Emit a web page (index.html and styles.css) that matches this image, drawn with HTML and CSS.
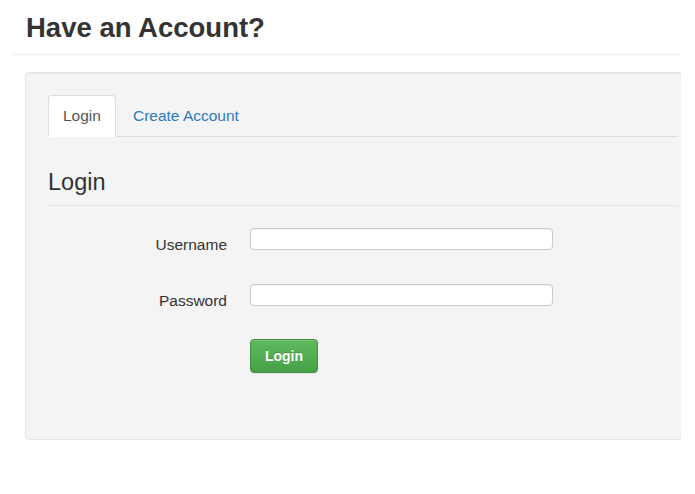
FILE: index.html
```html
<!DOCTYPE html>
<html lang="en">
<head>
  <meta charset="UTF-8" />
  <title>Have an Account?</title>
  <link rel="stylesheet" href="styles.css">
</head>
<body>
  <div class="page">
    <h1 class="page-title">Have an Account?</h1>
    <hr class="rule">
    <div class="well">
      <ul class="tabs">
        <li class="tab active"><a href="#">Login</a></li>
        <li class="tab"><a href="#">Create Account</a></li>
      </ul>
      <form class="login-form">
        <div class="legend">Login</div>
        <div class="form-grid">
          <label class="form-label" for="username">Username</label>
          <input class="form-input" id="username" type="text">
          <label class="form-label" for="password">Password</label>
          <input class="form-input" id="password" type="password">
          <span></span>
          <div><button class="btn-login" type="submit">Login</button></div>
        </div>
      </form>
    </div>
  </div>
</body>
</html>
```

FILE: styles.css
```css
body {
  margin: 0;
  background: #fff;
  color: #333;
  font-family: "Liberation Sans", Arial, sans-serif;
  font-size: 15.5px;
}
.page {
  width: 668px;
  margin-left: 13px;
  padding-top: 11px;
  overflow: hidden;
}
.page-title {
  margin: 0 12px 0 13px;
  font-size: 27.5px;
  line-height: 34px;
  font-weight: bold;
  color: #333;
}
.rule {
  margin: 9px 0 17px;
  border: 0;
  border-top: 1px solid #eee;
}
.well {
  margin-left: 12px;
  margin-right: -20px;
  padding: 22px;
  height: 322px;
  background: #f4f4f4;
  border: 1px solid #e3e3e3;
  border-radius: 4px;
  box-shadow: inset 0 1px 1px rgba(0, 0, 0, .05);
}
.tabs {
  display: flex;
  margin: 0;
  padding: 0;
  list-style: none;
  border-bottom: 1px solid #ddd;
}
.tab {
  margin-bottom: -1px;
  margin-right: 2px;
}
.tab a {
  display: block;
  padding: 10px 14px;
  line-height: 20px;
  border: 1px solid transparent;
  border-radius: 4px 4px 0 0;
  color: #2c7bbd;
  text-decoration: none;
}
.tab.active a {
  color: #555;
  background: #fff;
  border-color: #ddd #ddd transparent;
}
.legend {
  margin-top: 30px;
  padding-bottom: 8px;
  font-size: 23.5px;
  line-height: 30px;
  border-bottom: 1px solid #e5e5e5;
}
.form-grid {
  display: grid;
  grid-template-columns: 179px 303px;
  column-gap: 23px;
  row-gap: 30px;
  margin-top: 22px;
}
.form-label {
  text-align: right;
  padding-top: 8px;
  line-height: 18px;
}
.form-input {
  box-sizing: border-box;
  height: 22px;
  width: 303px;
  margin: 0;
  padding: 2px 6px;
  background: #fff;
  border: 1px solid #ccc;
  border-radius: 4px;
  box-shadow: inset 0 1px 1px rgba(0, 0, 0, .075);
}
.btn-login {
  height: 34px;
  width: 68px;
  padding: 0;
  margin-top: -1px;
  font-family: inherit;
  font-size: 14px;
  font-weight: bold;
  color: #fff;
  text-shadow: 0 -1px 0 rgba(0, 0, 0, .2);
  background: linear-gradient(to bottom, #5fba5f 0, #46a046 100%);
  border: 1px solid #3e8f3e;
  border-radius: 4px;
  box-shadow: inset 0 1px 0 rgba(255, 255, 255, .15), 0 1px 1px rgba(0, 0, 0, .075);
}
```
